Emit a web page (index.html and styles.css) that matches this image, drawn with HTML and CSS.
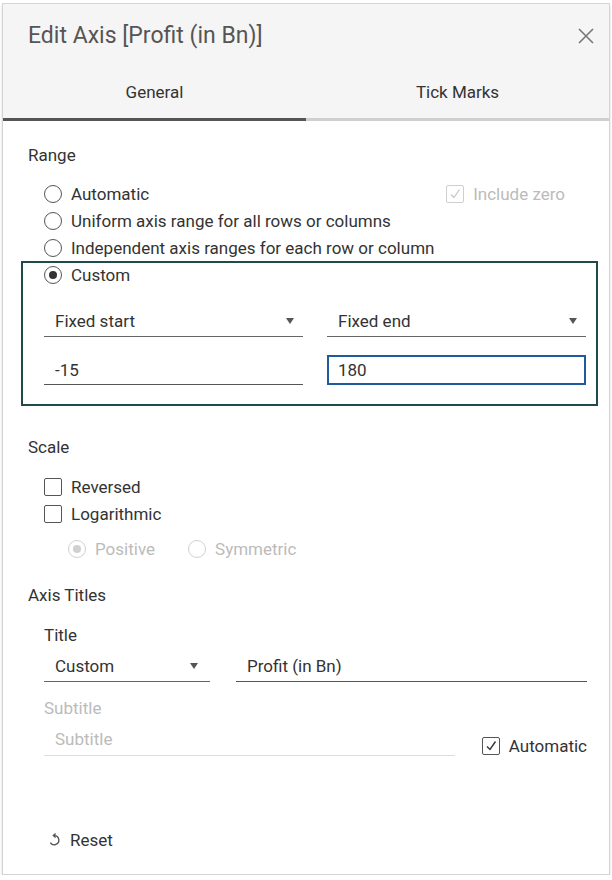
FILE: index.html
```html
<!DOCTYPE html>
<html>
<head>
<meta charset="utf-8">
<link rel="stylesheet" href="styles.css">
</head>
<body>
<div class="dialog">
  <div class="header">
    <div class="title-row">
      <div class="title">Edit Axis [Profit (in Bn)]</div>
      <svg class="close" width="18" height="18" viewBox="0 0 18 18"><path d="M2 2 L16 16 M16 2 L2 16" stroke="#777" stroke-width="1.6" fill="none"/></svg>
    </div>
    <div class="tabs">
      <div class="tab active">General</div>
      <div class="tab">Tick Marks</div>
    </div>
  </div>
  <div class="body">
    <div class="section-label">Range</div>
    <div class="radio-list">
      <div class="row">
        <span class="radio"></span><span class="lbl">Automatic</span>
        <span class="include-zero"><span class="check disabled"><svg width="12" height="12" viewBox="0 0 12 12"><path d="M2 6.5 L5 9.5 L10.5 1.5" stroke="#c8c8c8" stroke-width="1.3" fill="none"/></svg></span><span class="lbl">Include zero</span></span>
      </div>
      <div class="row"><span class="radio"></span><span class="lbl">Uniform axis range for all rows or columns</span></div>
      <div class="row"><span class="radio"></span><span class="lbl">Independent axis ranges for each row or column</span></div>
    </div>
    <div class="custom-box">
      <div class="row custom-row"><span class="radio checked"></span><span class="lbl">Custom</span></div>
      <div class="pair">
        <div class="dropdown"><span>Fixed start</span><span class="arrow"></span></div>
        <div class="dropdown"><span>Fixed end</span><span class="arrow"></span></div>
      </div>
      <div class="pair inputs">
        <div class="input">-15</div>
        <div class="input focused">180</div>
      </div>
    </div>

    <div class="section-label scale-label">Scale</div>
    <div class="check-list">
      <div class="row"><span class="check"></span><span class="lbl">Reversed</span></div>
      <div class="row"><span class="check"></span><span class="lbl">Logarithmic</span></div>
      <div class="row sub-radios">
        <span class="radio checked disabled"></span><span class="lbl dim">Positive</span>
        <span class="radio disabled sym"></span><span class="lbl dim">Symmetric</span>
      </div>
    </div>

    <div class="section-label axis-label">Axis Titles</div>
    <div class="titles">
      <div class="sub-label">Title</div>
      <div class="title-pair">
        <div class="dropdown small"><span>Custom</span><span class="arrow"></span></div>
        <div class="input wide">Profit (in Bn)</div>
      </div>
      <div class="sub-label dim subtitle-label">Subtitle</div>
      <div class="subtitle-pair">
        <div class="input placeholder">Subtitle</div>
        <div class="auto"><span class="check"><svg width="12" height="12" viewBox="0 0 12 12"><path d="M2 6.5 L5 9.5 L10.5 1.5" stroke="#333" stroke-width="1.4" fill="none"/></svg></span><span class="lbl">Automatic</span></div>
      </div>
    </div>

    <div class="reset">
      <svg width="14" height="14" viewBox="0 0 14 14"><path d="M6 2.6 A4.6 4.6 0 1 1 2.3 9.6" stroke="#555" stroke-width="1.4" fill="none"/><path d="M7.6 0.6 L5.4 2.6 L7.6 4.6" stroke="#555" stroke-width="1.4" fill="none"/></svg>
      <span>Reset</span>
    </div>
  </div>
</div>
</body>
</html>
```
FILE: styles.css
```css
* { box-sizing: border-box; }
html, body { margin: 0; padding: 0; background: #fff; }
body {
  font-family: Roboto, "Liberation Sans", sans-serif;
  color: #333;
  font-size: 17px;
}
.dialog {
  margin: 3px 2px 0 2px;
  width: 608px;
  height: 872px;
  border: 1px solid #d4d4d4;
  box-shadow: 0 3px 2px rgba(0,0,0,0.18);
  display: flex;
  flex-direction: column;
  background: #fff;
}
.header { background: #f5f5f5; }
.title-row {
  display: flex;
  align-items: center;
  justify-content: space-between;
  padding: 14px 14px 0 25px;
  height: 50px;
}
.title { font-size: 23px; color: #555; line-height: 36px; }
.close { margin-top: -1px; }
.tabs { display: flex; height: 67px; }
.tab {
  flex: 1;
  text-align: center;
  padding-top: 29px;
  line-height: 18px;
  font-size: 17px;
  color: #333;
  border-bottom: 3px solid #cfcfcf;
}
.tab.active { border-bottom-color: #555; }
.body { padding: 0 0 0 25px; flex: 1; display: flex; flex-direction: column; }
.section-label { line-height: 20px; margin-top: 24px; }
.radio-list { margin-top: 15px; padding-left: 16px; padding-right: 44px; }
.row { display: flex; align-items: center; height: 27px; }
.radio {
  width: 18px; height: 18px;
  border: 1.3px solid #555;
  border-radius: 50%;
  flex: none;
  display: flex; align-items: center; justify-content: center;
}
.radio.checked::after {
  content: ""; width: 8px; height: 8px; border-radius: 50%; background: #333;
}
.radio.disabled { border-color: #d0d0d0; }
.radio.disabled.checked::after { background: #d0d0d0; }
.lbl { margin-left: 9px; white-space: nowrap; }
.include-zero { margin-left: auto; display: flex; align-items: center; color: #bbb; }
.check {
  width: 18px; height: 18px;
  border: 1.3px solid #555;
  border-radius: 2px;
  flex: none;
  display: flex; align-items: center; justify-content: center;
}
.check.disabled { border-color: #cfcfcf; }
.custom-box {
  margin-left: -7px;
  width: 577px;
  border: 2px solid #1f4b4d;
  padding: 1px 10px 19px 21px;
}
.custom-row { height: 22px; }
.pair { display: flex; justify-content: space-between; margin-top: 19px; }
.dropdown {
  width: 259px;
  height: 32px;
  border-bottom: 1.5px solid #666;
  display: flex; align-items: center; justify-content: space-between;
  padding: 0 9px 0 11px;
}
.arrow {
  width: 0; height: 0;
  border-left: 4.5px solid transparent;
  border-right: 4.5px solid transparent;
  border-top: 6px solid #555;
}
.pair.inputs { margin-top: 18px; }
.input {
  width: 259px;
  height: 30px;
  border-bottom: 1.5px solid #555;
  display: flex; align-items: center;
  padding-left: 11px;
}
.input.focused { border: 2px solid #1f5b9c; padding-left: 9px; }
.scale-label { margin-top: 31px; }
.check-list { margin-top: 16px; padding-left: 16px; }
.sub-radios { margin-top: 8px; padding-left: 24px; }
.dim { color: #bbb; }
.radio.sym { margin-left: 33px; }
.axis-label { margin-top: 23px; }
.titles { padding-left: 16px; padding-right: 22px; }
.sub-label { line-height: 20px; margin-top: 20px; }
.title-pair { display: flex; justify-content: space-between; margin-top: 5px; }
.dropdown.small { width: 166px; height: 32px; padding-right: 12px; }
.input.wide { width: 351px; height: 32px; }
.title-pair .input { border-bottom-color: #555; }
.subtitle-label { margin-top: 16px; }
.subtitle-pair { display: flex; align-items: flex-end; justify-content: space-between; margin-top: 5px; }
.input.placeholder { width: 411px; height: 33px; color: #bbb; border-bottom: 1px solid #ddd; }
.auto { display: flex; align-items: center; height: 20px; }
.reset { margin-top: auto; margin-bottom: 24px; display: flex; align-items: center; padding-left: 20px; height: 20px; }
.reset span { margin-left: 8px; }
```
